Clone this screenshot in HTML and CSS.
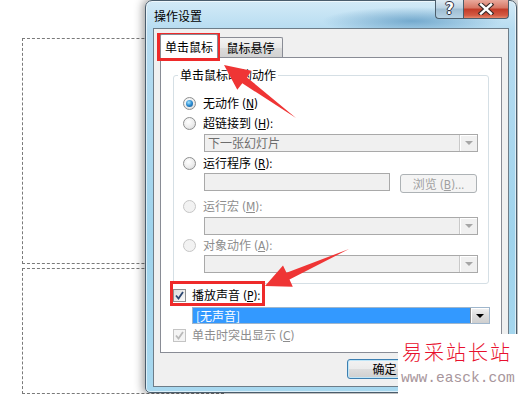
FILE: index.html
```html
<!DOCTYPE html>
<html lang="zh-CN">
<head>
    <meta charset="UTF-8">
    <title>操作设置</title>
    <link rel="stylesheet" href="styles.css">
</head>
<body>
    <div class="placeholder upper"></div>
    <div class="placeholder lower"></div>

    <div class="window">
        <div class="titlebar">
            <span class="title">操作设置</span>
            <div class="caption">
                <div class="cap help">?</div>
                <div class="cap close">
                    <svg width="18" height="12" viewBox="0 0 18 12">
                        <path d="M4 1.5 L14 10.5 M14 1.5 L4 10.5" stroke="#3a2a28" stroke-width="4.6" stroke-linecap="square"/>
                        <path d="M4 1.5 L14 10.5 M14 1.5 L4 10.5" stroke="#fff" stroke-width="2.4" stroke-linecap="square"/>
                    </svg>
                </div>
            </div>
        </div>

        <div class="client">
            <div class="tabs">
                <div class="tab active">单击鼠标</div>
                <div class="tab">鼠标悬停</div>
            </div>
            <div class="panel">
                <fieldset class="group">
                    <legend>单击鼠标时的动作</legend>
                    <div class="opt"><span class="radio on"></span><span>无动作<span class="key">(<u>N</u>)</span></span></div>
                    <div class="opt mt6"><span class="radio"></span><span>超链接到<span class="key">(<u>H</u>):</span></span></div>
                    <div class="combo sub mt4"><span class="val">下一张幻灯片</span><span class="drop"></span></div>
                    <div class="opt mt4"><span class="radio"></span><span>运行程序<span class="key">(<u>R</u>):</span></span></div>
                    <div class="prog sub mt3">
                        <div class="field"></div>
                        <div class="btn browse">浏览<span class="key">(<u>B</u>)...</span></div>
                    </div>
                    <div class="opt off mt6"><span class="radio"></span><span>运行宏<span class="key">(<u>M</u>):</span></span></div>
                    <div class="combo sub mt4"><span class="val"></span><span class="drop"></span></div>
                    <div class="opt off mt3"><span class="radio"></span><span>对象动作<span class="key">(<u>A</u>):</span></span></div>
                    <div class="combo sub mt3"><span class="val"></span><span class="drop"></span></div>
                </fieldset>

                <div class="chk-row mt4">
                    <span class="check">
                        <svg width="11" height="11" viewBox="0 0 11 11"><path d="M2 5.5 L4.5 8.5 L9 2" fill="none" stroke="#2b4670" stroke-width="1.8"/></svg>
                    </span><span>播放声音<span class="key">(<u>P</u>):</span></span>
                </div>
                <div class="sound mt5">
                    <span class="val">[无声音]</span>
                    <span class="drop dark"></span>
                </div>
                <div class="chk-row off mt4">
                    <span class="check">
                        <svg width="11" height="11" viewBox="0 0 11 11"><path d="M2 5.5 L4.5 8.5 L9 2" fill="none" stroke="#b9b9b9" stroke-width="1.8"/></svg>
                    </span><span>单击时突出显示<span class="key">(<u>C</u>)</span></span>
                </div>
            </div>
            <div class="footer">
                <div class="btn default">确定</div>
                <div class="btn"></div>
            </div>
        </div>
    </div>

    <!-- annotations drawn over the screenshot -->
    <svg class="marks" width="518" height="394" viewBox="0 0 518 394">
        <rect x="158.5" y="34.5" width="60" height="25" fill="none" stroke="#ee2a2a" stroke-width="3"/>
        <rect x="171.5" y="282.5" width="92" height="22" fill="none" stroke="#ee2a2a" stroke-width="3"/>
        <polygon points="224,65 251.5,70.8 247,77.4 296,118 242.3,83.3 237.3,89.8" fill="#ef3535"/>
        <polygon points="265,286 292.8,286.8 289.5,279.6 349,249 286.5,272.8 283,265.6" fill="#ef3535"/>
    </svg>

    <div class="watermark">
        <div class="wm-name">易采站长站</div>
        <div class="wm-url">www.easck.com</div>
    </div>
</body>
</html>
```

FILE: styles.css
```css
body {
    margin: 0;
    width: 518px;
    height: 394px;
    overflow: hidden;
    position: relative;
    background: #fff;
    font-family: "Noto Sans CJK SC", sans-serif;
    font-size: 12px;
    color: #000;
    text-autospace: no-autospace;
}
u {
    text-decoration: underline;
    text-underline-offset: 1px;
}
.key {
    margin-left: 3px;
    font-family: "DejaVu Sans Condensed", "DejaVu Sans", sans-serif;
    font-size: 12px;
    letter-spacing: -0.3px;
}

/* slide placeholders behind the dialog */
.placeholder {
    position: absolute;
    left: 22px;
    width: 200px;
    border: 1px dashed #7a7a7a;
}
.upper {
    top: 38px;
    height: 224px;
}
.lower {
    top: 268px;
    height: 124px;
}

/* dialog frame */
.window {
    position: absolute;
    left: 145px;
    top: 0;
    width: 372px;
    height: 393px;
    box-sizing: border-box;
    padding: 0 7px 5px;
    display: flex;
    flex-direction: column;
    border: 1px solid #4a5d6c;
    border-radius: 7px 7px 5px 5px;
    background:
        radial-gradient(ellipse 90px 14px at 72% 20px, rgba(55, 125, 175, .55), rgba(55, 125, 175, 0)),
        linear-gradient(#d3eaf7, #b7dcf1 28px, #9fd3ec 60%, #a8d8ef);
    box-shadow: 0 0 10px 2px rgba(0, 0, 0, .4), inset 0 0 0 1px rgba(255, 255, 255, .6);
}
.titlebar {
    height: 27px;
    display: flex;
    justify-content: space-between;
    align-items: flex-start;
    flex: none;
}
.title {
    line-height: 29px;
    padding-left: 1px;
}
.caption {
    display: flex;
    margin-top: -1px;
}
.cap {
    height: 19px;
    box-sizing: border-box;
    border: 1px solid #4c5e6c;
    border-top: none;
    display: flex;
    align-items: center;
    justify-content: center;
}
.help {
    width: 28px;
    border-radius: 0 0 0 4px;
    border-right: none;
    background: linear-gradient(#dce9f2, #b9d1e2 45%, #9fbdd2 50%, #b6d2e4);
    color: #fff;
    font: bold 15px "DejaVu Sans", sans-serif;
    text-shadow: 0 0 1px #223, 1px 0 0 #334, -1px 0 0 #334, 0 1px 0 #334, 0 -1px 0 #334;
}
.close {
    width: 46px;
    border-radius: 0 0 4px 0;
    background: linear-gradient(#e9a99c, #d77563 45%, #c23b28 50%, #d45a43 85%, #e58a6f);
}

/* client area */
.client {
    flex: 1;
    background: #f0f0f0;
    border: 1px solid #6d7d89;
    padding: 0 6px;
    display: flex;
    flex-direction: column;
}
.tabs {
    height: 28px;
    display: flex;
    align-items: flex-end;
    flex: none;
}
.tab {
    box-sizing: border-box;
    height: 20px;
    width: 65px;
    border: 1px solid #898c95;
    border-bottom: none;
    border-radius: 2px 2px 0 0;
    background: linear-gradient(#f4f4f4, #e8e8e8 50%, #dcdcdc 51%, #d2d2d2);
    text-align: center;
    line-height: 19px;
}
.tab.active {
    position: relative;
    z-index: 1;
    height: 24px;
    width: 58px;
    margin-bottom: -1px;
    background: #fff;
    line-height: 24px;
}
.panel {
    height: 296px;
    box-sizing: border-box;
    flex: none;
    background: #fff;
    border: 1px solid #898c95;
}
.group {
    margin: 10px 12px 0;
    padding: 14px 10px 10px 9px;
    border: 1px solid #d5dfe5;
    border-radius: 3px;
}
.group legend {
    padding: 0 2px;
    margin-left: -5px;
    line-height: 14px;
}

.opt, .chk-row {
    height: 14px;
    line-height: 14px;
    display: flex;
    align-items: center;
    gap: 7px;
    white-space: nowrap;
}
.off {
    color: #8d8d8d;
}
.mt3 { margin-top: 3px; }
.mt4 { margin-top: 4px; }
.mt5 { margin-top: 5px; }
.mt6 { margin-top: 6px; }

.radio {
    flex: none;
    position: relative;
    width: 13px;
    height: 13px;
    box-sizing: border-box;
    border-radius: 50%;
    border: 1px solid #8e8f8f;
    background: radial-gradient(circle at 40% 35%, #fff, #ececec 55%, #cfd1d3);
}
.radio.on::after {
    content: "";
    position: absolute;
    inset: 2px;
    border-radius: 50%;
    background: radial-gradient(circle at 40% 35%, #a6e5ff, #2a8ad0 50%, #0c4d86);
}
.off .radio {
    border-color: #c6c6c6;
    background: #f2f2f2;
}

.sub {
    margin-left: 21px;
}
.combo {
    width: 274px;
    height: 18px;
    box-sizing: border-box;
    display: flex;
    border: 1px solid #a9a9a9;
    background: #f0f0f0;
    color: #6d6d6d;
}
.combo .val {
    flex: 1;
    padding-left: 3px;
    line-height: 16px;
}
.drop {
    width: 17px;
    border-left: 1px solid #c9c9c9;
    box-shadow: inset 1px 1px 0 #fff;
    display: flex;
    align-items: center;
    justify-content: center;
}
.drop::after {
    content: "";
    border-left: 4px solid transparent;
    border-right: 4px solid transparent;
    border-top: 4px solid #a6a6a6;
}

.prog {
    display: flex;
    align-items: flex-start;
    gap: 10px;
    height: 20px;
}
.field {
    width: 186px;
    height: 18px;
    box-sizing: border-box;
    border: 1px solid #a9a9a9;
    background: #f0f0f0;
}
.btn {
    width: 75px;
    height: 20px;
    box-sizing: border-box;
    border: 1px solid #707070;
    border-radius: 3px;
    background: linear-gradient(#f2f2f2, #ebebeb 50%, #dddddd 51%, #cfcfcf);
    text-align: center;
    line-height: 18px;
}
.browse {
    width: 77px;
    height: 19px;
    margin-top: 1px;
    border-color: #adb2b5;
    background: #f4f4f4;
    color: #a0a0a0;
    line-height: 17px;
    white-space: nowrap;
}

.chk-row {
    margin-left: 12px;
    gap: 6px;
}
.check {
    flex: none;
    width: 13px;
    height: 13px;
    box-sizing: border-box;
    border: 1px solid #8e8f8f;
    background: linear-gradient(135deg, #dcdcdc, #fbfbfb);
    display: flex;
    align-items: center;
    justify-content: center;
}
.off .check {
    border-color: #c4c4c4;
    background: #f4f4f4;
}
.sound {
    margin-left: 31px;
    width: 298px;
    height: 17px;
    box-sizing: border-box;
    display: flex;
    border: 1px solid #9fb6cc;
}
.sound .val {
    flex: 1;
    background: #3399ff;
    color: #fff;
    padding-left: 3px;
    line-height: 15px;
}
.drop.dark {
    width: 18px;
    border-left: 1px solid #8a8a8a;
    background: linear-gradient(#f2f2f2, #dcdcdc 50%, #cfcfcf);
}
.drop.dark::after {
    border-top-color: #000;
}

.footer {
    flex: 1;
    display: flex;
    justify-content: flex-end;
    align-items: flex-start;
    gap: 5px;
    padding-top: 6px;
}
.btn.default {
    border-color: #3c7fb1;
    box-shadow: inset 0 0 0 1px #bfe6f8;
}

/* overlays */
.marks {
    position: absolute;
    left: 0;
    top: 0;
}
.watermark {
    position: absolute;
    left: 398px;
    top: 334px;
    width: 120px;
    height: 60px;
    background: #fff;
}
.wm-name {
    padding: 6px 0 0 4px;
    font-size: 20px;
    font-weight: 300;
    line-height: 24px;
    letter-spacing: 2px;
    color: #e8102d;
    white-space: nowrap;
}
.wm-url {
    padding: 6px 0 0 3px;
    font-family: "Liberation Mono", monospace;
    font-size: 14.6px;
    line-height: 16px;
    color: #a8969c;
    white-space: nowrap;
}
```
